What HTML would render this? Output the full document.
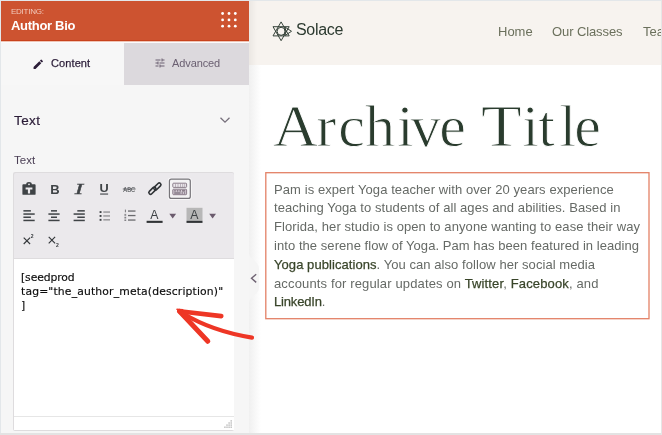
<!DOCTYPE html>
<html lang="en">
<head>
<meta charset="utf-8">
<title>SeedProd Author Bio</title>
<style>
html,body{margin:0;padding:0;}
body{width:662px;height:435px;position:relative;overflow:hidden;background:#ffffff;font-family:"Liberation Sans",sans-serif;}
.abs{position:absolute;}
.t,.bl,.et,svg{will-change:transform;}
.t{position:absolute;white-space:nowrap;line-height:1;}
/* frame */
#frame-top{left:0;top:0;width:662px;height:1px;background:#e3e7ea;}
#frame-left{left:0;top:0;width:1px;height:435px;background:#e3e7ea;}
#frame-bottom{left:0;top:433px;width:662px;height:2px;background:#e3e3e3;}
/* sidebar */
#sidebar{left:1px;top:1px;width:248px;height:432px;background:#f6f6f6;}
#sb-head{left:1px;top:1px;width:248px;height:39px;background:#cd5330;}
#sb-head-b1{left:1px;top:40px;width:248px;height:1px;background:#c8421c;}
#sb-head-b2{left:1px;top:41px;width:248px;height:1px;background:#efc4b5;}
#sb-head-b3{left:1px;top:42px;width:248px;height:1px;background:#fbfbfc;}
#tab-content{left:1px;top:41px;width:123px;height:44px;background:#f7f7f7;}
#tab-adv{left:124px;top:41px;width:125px;height:44px;background:#dcd9dd;}
#gutter{left:249px;top:65px;width:13px;height:368px;background:linear-gradient(to right,#f0f0f0 0,#ffffff 12px);}
/* preview */
#pv-head{left:250px;top:1px;width:412px;height:64px;background:#f7f3ef;}
#pv-headshadow{left:249px;top:1px;width:8px;height:64px;background:linear-gradient(to right,#ebe7e3,#f7f3ef);}
.bl{position:absolute;left:273.500px;white-space:nowrap;font-size:13px;line-height:18px;color:#666a66;}
.bl b{font-weight:normal;color:#39452a;-webkit-text-stroke:0.250px #39452a;}
.ttl{font-family:"Liberation Serif",serif;font-size:60px;color:#2a3c2e;transform-origin:0 0;-webkit-text-stroke:0.900px #ffffff;}
/* editor */
#edwrap{left:13px;top:172px;width:221px;height:259px;background:#dedcde;border-radius:2px;}
#tb{left:14px;top:173px;width:220px;height:85px;background:#ebe9ec;border-radius:2px 2px 0 0;}
#ed{left:14px;top:259px;width:220px;height:157px;background:#ffffff;}
#ed-status{left:14px;top:417px;width:220px;height:13px;background:#ffffff;}
#ed-line{left:14px;top:416px;width:220px;height:1px;background:#e6e6e6;}
.et{position:absolute;left:20.500px;white-space:nowrap;font-family:"DejaVu Sans",sans-serif;font-size:10.800px;line-height:14px;color:#0c0c0c;-webkit-text-stroke:0.150px #0c0c0c;}
</style>
</head>
<body>
<div id="root" style="position:absolute;left:0;top:0;width:662px;height:435px;will-change:opacity;opacity:0.999;">
<div class="abs" id="sidebar"></div>
<div class="abs" id="gutter"></div>
<div class="abs" id="pv-head"></div>
<div class="abs" id="pv-headshadow"></div>
<div class="abs" id="sb-head"></div>
<div class="abs" id="tab-content"></div>
<div class="abs" id="tab-adv"></div>
<div class="abs" id="sb-head-b1"></div>
<div class="abs" id="sb-head-b2"></div>
<div class="abs" id="sb-head-b3"></div>

<!-- sidebar header text -->
<div class="t" id="t-editing" style="left:11px;top:8px;font-size:8px;color:#f2cabd;letter-spacing:-0.250px;">EDITING:</div>
<div class="t" id="t-author" style="left:11px;top:19px;font-size:13px;font-weight:bold;color:#ffffff;letter-spacing:-0.3px;">Author Bio</div>
<svg class="abs" style="left:220px;top:10px" width="20" height="20" viewBox="0 0 20 20">
 <g fill="#ffffff">
  <circle cx="2.600" cy="3.500" r="1.400"/><circle cx="9" cy="3.500" r="1.400"/><circle cx="15.300" cy="3.500" r="1.400"/>
  <circle cx="2.600" cy="9.900" r="1.400"/><circle cx="9" cy="9.900" r="1.400"/><circle cx="15.300" cy="9.900" r="1.400"/>
  <circle cx="2.600" cy="16.200" r="1.400"/><circle cx="9" cy="16.200" r="1.400"/><circle cx="15.300" cy="16.200" r="1.400"/>
 </g>
</svg>

<!-- tabs -->
<svg class="abs" style="left:32px;top:57.500px" width="12.500" height="12.500" viewBox="0 0 24 24"><path fill="#2b1d38" d="M3 17.25V21h3.75L17.81 9.94l-3.75-3.75L3 17.25zM20.71 7.04a1 1 0 0 0 0-1.41l-2.34-2.34a1 1 0 0 0-1.41 0l-1.83 1.83 3.75 3.75 1.83-1.83z"/></svg>
<div class="t" id="t-content" style="left:51px;top:58px;font-size:11px;color:#2b1d38;letter-spacing:0.1px;-webkit-text-stroke:0.25px #2b1d38;">Content</div>
<svg class="abs" style="left:154px;top:57px" width="12" height="12" viewBox="0 0 24 24"><path fill="#6b6072" d="M3 17v2h6v-2H3zM3 5v2h10V5H3zm10 16v-2h8v-2h-8v-2h-2v6h2zM7 9v2H3v2h4v2h2V9H7zm14 4v-2H11v2h10zm-6-4h2V7h4V5h-4V3h-2v6z"/></svg>
<div class="t" id="t-adv" style="left:172px;top:58px;font-size:11px;color:#6b6072;letter-spacing:-0.1px;">Advanced</div>

<!-- section -->
<div class="t" id="t-sec" style="left:14px;top:113.500px;font-size:13.500px;color:#2b1d38;letter-spacing:0.400px;-webkit-text-stroke:0.200px #2b1d38;">Text</div>
<svg class="abs" style="left:219px;top:115px" width="12" height="10" viewBox="0 0 12 10"><path d="M1.5 2.7 L6 7.2 L10.5 2.7" fill="none" stroke="#77707c" stroke-width="1.3"/></svg>
<div class="t" id="t-lab" style="left:14px;top:155px;font-size:11.5px;color:#4b3f55;">Text</div>

<!-- editor -->
<div class="abs" id="edwrap"></div>
<div class="abs" id="tb"></div>
<div class="abs" id="ed"></div>
<div class="abs" id="ed-line"></div>
<div class="abs" id="ed-status"></div>

<!-- toolbar icons (page coordinates) -->
<svg class="abs" id="tbicons" style="left:14px;top:173px" width="220" height="85" viewBox="14 173 220 85" font-family="Liberation Sans, sans-serif">
 <!-- paste as text -->
 <g fill="#3f4346">
  <path d="M23.3 184.300 h2.900 a2.800 2.300 0 0 1 5.600 0 h2.900 a0.900 0.900 0 0 1 0.900 0.900 v8.700 a0.900 0.900 0 0 1 -0.900 0.900 h-11.400 a0.900 0.900 0 0 1 -0.900 -0.900 v-8.700 a0.900 0.900 0 0 1 0.900 -0.900 z"/>
 </g>
 <circle cx="29" cy="184.300" r="0.900" fill="#ebe9ec"/>
 <path d="M25.600 187.600 h6.800 v1.900 h-2.300 v4.100 h-2.200 v-4.100 h-2.300 z" fill="#ebe9ec"/>
 <!-- B I U -->
 <text x="50.300" y="193.600" font-size="13" font-weight="bold" fill="#3f4346">B</text>
 <text x="74.800" y="193.700" font-size="14" font-style="italic" font-family="Liberation Serif, serif" fill="#3f4346" stroke="#3f4346" stroke-width="0.350" textLength="8.400" lengthAdjust="spacingAndGlyphs">I</text>
 <text x="99.500" y="192.200" font-size="10.200" font-weight="bold" fill="#3f4346" textLength="9.200" lengthAdjust="spacingAndGlyphs">U</text>
 <rect x="100.100" y="193.500" width="8" height="1.100" fill="#3f4346"/>
 <!-- ABC strike -->
 <text x="123.300" y="191.500" font-size="7.200" fill="#3f4346" textLength="11.900" lengthAdjust="spacingAndGlyphs">ABC</text>
 <rect x="122.800" y="188.600" width="12.800" height="0.800" fill="#3f4346"/>
 <!-- link -->
 <g fill="none" stroke="#2f3336" stroke-width="1.600">
  <rect x="148.100" y="189" width="8.600" height="3.400" rx="1.700" ry="1.700" transform="rotate(-45 152.400 190.700)"/>
  <rect x="153.100" y="184.800" width="8.600" height="3.400" rx="1.700" ry="1.700" transform="rotate(-45 157.400 186.500)"/>
 </g>
 <!-- keyboard toggle (active) -->
 <rect x="168.400" y="178.300" width="22.800" height="21" rx="2.600" ry="2.600" fill="none" stroke="#f8f7f8" stroke-width="1.200"/>
 <rect x="169.400" y="179.200" width="20.900" height="19.200" rx="2" ry="2" fill="#f4f3f4" stroke="#77757a" stroke-width="1.200"/>
 <rect x="172.800" y="183.200" width="13.800" height="4.200" rx="0.800" fill="#ece8ec" stroke="#80727f" stroke-width="0.900"/>
 <rect x="172.800" y="189.200" width="13.800" height="5.500" rx="0.800" fill="#d3cad3" stroke="#80727f" stroke-width="0.900"/>
 <g fill="#9a8e9a">
  <rect x="175.300" y="183.600" width="0.600" height="3.400"/><rect x="177.700" y="183.600" width="0.600" height="3.400"/><rect x="180.100" y="183.600" width="0.600" height="3.400"/><rect x="182.500" y="183.600" width="0.600" height="3.400"/><rect x="184.500" y="183.600" width="0.600" height="3.400"/>
 </g>
 <g fill="#5d505e">
  <rect x="174.200" y="190.400" width="1.600" height="1"/><rect x="176.800" y="190.400" width="1.600" height="1"/><rect x="179.400" y="190.400" width="1.600" height="1"/><rect x="182" y="190.400" width="3.200" height="1"/>
  <rect x="174.200" y="192.500" width="6.400" height="1"/><rect x="181.600" y="192.500" width="1.300" height="1"/><rect x="183.900" y="192.500" width="1.300" height="1"/>
 </g>
 <!-- align left/center/right -->
 <g fill="#3f4346">
  <rect x="23.400" y="210.100" width="7.500" height="1.500"/><rect x="23.400" y="213.300" width="11.300" height="1.500"/><rect x="23.400" y="216.500" width="7.500" height="1.500"/><rect x="23.400" y="219.700" width="11.300" height="1.500"/>
  <rect x="51" y="210.100" width="6" height="1.500"/><rect x="48.400" y="213.300" width="11.200" height="1.500"/><rect x="51" y="216.500" width="6" height="1.500"/><rect x="48.400" y="219.700" width="11.200" height="1.500"/>
  <rect x="77.300" y="210.100" width="7.500" height="1.500"/><rect x="73.600" y="213.300" width="11.200" height="1.500"/><rect x="77.300" y="216.500" width="7.500" height="1.500"/><rect x="73.600" y="219.700" width="11.200" height="1.500"/>
 </g>
 <!-- bullets -->
 <g fill="#3f4346">
  <rect x="99.600" y="211.100" width="1.900" height="1.900"/><rect x="99.600" y="215" width="1.900" height="1.900"/><rect x="99.600" y="218.900" width="1.900" height="1.900"/>
 </g>
 <g fill="#8d8d90">
  <rect x="103.300" y="211.400" width="6.700" height="1.300"/><rect x="103.300" y="215.300" width="6.700" height="1.300"/><rect x="103.300" y="219.200" width="6.700" height="1.300"/>
 </g>
 <!-- numbered -->
 <g fill="#6a6a6e">
  <rect x="128" y="210.400" width="7.500" height="1.300"/><rect x="128" y="214.900" width="7.500" height="1.300"/><rect x="128" y="219.400" width="7.500" height="1.300"/>
 </g>
 <g fill="#6a6a6e">
  <rect x="124.900" y="209.600" width="0.900" height="2.700"/><rect x="124.400" y="213.900" width="1.800" height="0.800"/><rect x="124.400" y="215.400" width="1.800" height="0.800"/><rect x="124.400" y="217" width="1.800" height="0.800"/><rect x="124.400" y="218.600" width="1.800" height="0.800"/><rect x="124.400" y="220.200" width="1.800" height="0.800"/>
 </g>
 <!-- text colour -->
 <text x="150.300" y="219.300" font-size="12.300" fill="#3f4346">A</text>
 <rect x="146.600" y="220.800" width="16" height="2.100" fill="#303336"/>
 <path d="M169.300 213.800 h6.800 l-3.400 4.600 z" fill="#6b5b6d"/>
 <!-- bg colour -->
 <rect x="186.500" y="207.800" width="16" height="13" fill="#b7b7b7"/>
 <rect x="186.500" y="220.800" width="16" height="2.100" fill="#303336"/>
 <text x="190.300" y="219.300" font-size="12.300" fill="#3f4346">A</text>
 <path d="M209.200 213.800 h6.800 l-3.400 4.600 z" fill="#6b5b6d"/>
 <!-- super / sub -->
 <g fill="none" stroke="#33373a" stroke-width="1.150">
  <path d="M23.700 237.600 l6.400 6.400 M30.100 237.600 l-6.400 6.400"/>
  <path d="M48.700 236.900 l6.400 6.400 M55.100 236.900 l-6.400 6.400"/>
 </g>
 <text x="30.700" y="238.400" font-size="5" font-weight="bold" fill="#33373a">2</text>
 <text x="55.900" y="246.800" font-size="5" font-weight="bold" fill="#33373a">2</text>
</svg>
<div class="et" style="top:271px;letter-spacing:-0.100px;">[seedprod</div>
<div class="et" style="top:285px;letter-spacing:0.150px;">tag="the_author_meta(description)"</div>
<div class="et" style="top:299px;">]</div>

<svg class="abs" id="rsz" style="left:223px;top:419px" width="10" height="10" viewBox="0 0 10 10"><g fill="#b9b9b9"><rect x="7.500" y="1.200" width="1.400" height="1.400"/><rect x="5.400" y="3.300" width="1.400" height="1.400"/><rect x="7.500" y="3.300" width="1.400" height="1.400"/><rect x="3.300" y="5.400" width="1.400" height="1.400"/><rect x="5.400" y="5.400" width="1.400" height="1.400"/><rect x="7.500" y="5.400" width="1.400" height="1.400"/><rect x="1.200" y="7.500" width="1.400" height="1.400"/><rect x="3.300" y="7.500" width="1.400" height="1.400"/><rect x="5.400" y="7.500" width="1.400" height="1.400"/><rect x="7.500" y="7.500" width="1.400" height="1.400"/></g></svg>
<!-- collapse chevron -->
<svg class="abs" id="collapse" style="left:246px;top:250px" width="16" height="56" viewBox="246 250 16 56">
 <path d="M249 253 C 249 260 259 261 259 268 L259 288 C 259 295 249 296 249 303 Z" fill="#f5f5f5"/>
 <path d="M256.200 274.300 L251.500 278.300 L256.200 282.400" fill="none" stroke="#6f6373" stroke-width="1.400"/>
</svg>

<!-- preview header -->
<svg class="abs" id="logo" style="left:268px;top:16px" width="30" height="30" viewBox="268 16 30 30">
 <g fill="none" stroke="#2c3a30" stroke-width="0.950" stroke-linejoin="miter">
  <path d="M281.100 21.900 L289.200 35.900 L273 35.900 Z"/>
  <path d="M281.100 40.700 L289.200 26.700 L273 26.700 Z"/>
  <path d="M291.500 31.300 L285.200 27.200 L285.200 35.400 Z"/>
  <circle cx="281.100" cy="31.300" r="4"/>
 </g>
</svg>
<div class="t" id="t-solace" style="left:295.500px;top:21.500px;font-size:16px;color:#2c3a30;letter-spacing:-0.3px;">Solace</div>
<div class="t nav" id="t-home" style="left:498px;top:25px;font-size:13px;color:#6b705c;">Home</div>
<div class="t nav" id="t-classes" style="left:552px;top:25px;font-size:13px;letter-spacing:-0.100px;color:#6b705c;">Our Classes</div>
<div class="t nav" id="t-tea" style="left:642.500px;top:25px;font-size:13px;color:#6b705c;">Teachers</div>

<!-- title -->
<div class="t ttl" id="t-archive" style="left:272.500px;top:96px;"><span style="display:inline-block;transform:scaleX(1.040);transform-origin:0 0;">A</span><span style="letter-spacing:2px">r</span>c<span style="letter-spacing:2px">h</span><span style="letter-spacing:-3px">i</span><span style="letter-spacing:-1.500px">v</span>e</div>
<div class="t ttl" id="t-title2" style="left:481px;top:96px;"><span style="display:inline-block;letter-spacing:4.500px;transform:scaleX(1.110);transform-origin:0 0;">T</span><span style="letter-spacing:-0.500px">i</span><span style="letter-spacing:4.500px">t</span><span style="letter-spacing:-2px">l</span>e</div>

<!-- bio -->
<svg class="abs" id="bio" style="left:260px;top:168px" width="400" height="160" viewBox="260 168 400 160"><rect x="265.800" y="172.700" width="383.200" height="146" fill="none" stroke="#e38166" stroke-width="1.300"/></svg>
<div class="bl" style="top:180.500px;letter-spacing:0.080px;">Pam is expert Yoga teacher with over 20 years experience</div>
<div class="bl" style="top:199.400px;letter-spacing:0.075px;">teaching Yoga to students of all ages and abilities. Based in</div>
<div class="bl" style="top:218.200px;letter-spacing:0.087px;">Florida, her studio is open to anyone wanting to ease their way</div>
<div class="bl" style="top:236.900px;letter-spacing:0.061px;">into the serene flow of Yoga. Pam has been featured in leading</div>
<div class="bl" style="top:255.700px;letter-spacing:0.065px;"><b>Yoga publications</b>. You can also follow her social media</div>
<div class="bl" style="top:274.500px;letter-spacing:0.139px;">accounts for regular updates on <b>Twitter</b>, <b>Facebook</b>, and</div>
<div class="bl" style="top:293.300px;letter-spacing:-0.180px;"><b>LinkedIn</b>.</div>

<!-- red arrow -->
<svg class="abs" id="arrow" style="left:160px;top:295px" width="110" height="60" viewBox="160 295 110 60">
 <g fill="none" stroke="#ee3625" stroke-linecap="round" stroke-linejoin="round">
  <path d="M252 337.600 Q 212 331 184 314" stroke-width="4.200"/>
  <path d="M221.300 316.100 L179.500 311.300" stroke-width="4.600"/>
  <path d="M207.800 341.300 L179.500 311.300" stroke-width="5"/>
 </g>
 <path d="M176.600 309 L183 309.500 L181 314.500 Z" fill="#ee3625" stroke="#ee3625" stroke-width="1" stroke-linejoin="round"/>
</svg>

<div class="abs" id="frame-top"></div>
<div class="abs" id="frame-left"></div>
<div class="abs" id="frame-bottom"></div>
<div class="abs" id="frame-right" style="left:661px;top:0;width:1px;height:435px;background:#e6e6e6;"></div>
</div>
</body>
</html>
